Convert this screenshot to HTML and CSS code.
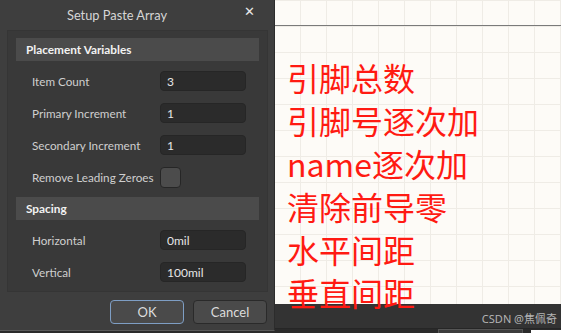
FILE: index.html
```html
<!DOCTYPE html>
<html>
<head>
    <title>Setup Paste Array</title>
    <link rel="stylesheet" href="styles.css">
</head>
<body>
    <div class="dialog">
        <div class="titlebar">
            <span class="title">Setup Paste Array</span>
            <span class="close">&#x2715;</span>
        </div>
        <div class="panel">
            <div class="section-head">Placement Variables</div>
            <div class="row">
                <span class="label">Item Count</span>
                <input class="field" type="text" value="3">
            </div>
            <div class="row">
                <span class="label">Primary Increment</span>
                <input class="field" type="text" value="1">
            </div>
            <div class="row">
                <span class="label">Secondary Increment</span>
                <input class="field" type="text" value="1">
            </div>
            <div class="row">
                <span class="label">Remove Leading Zeroes</span>
                <span class="check"></span>
            </div>
            <div class="section-head">Spacing</div>
            <div class="row">
                <span class="label">Horizontal</span>
                <input class="field" type="text" value="0mil">
            </div>
            <div class="row">
                <span class="label">Vertical</span>
                <input class="field" type="text" value="100mil">
            </div>
        </div>
        <div class="footer">
            <button class="btn btn-ok">OK</button>
            <button class="btn">Cancel</button>
        </div>
    </div>

    <div class="canvas">
        <div class="canvas-top"></div>
        <div class="notes">
            <div>引脚总数</div>
            <div>引脚号逐次加</div>
            <div>name逐次加</div>
            <div>清除前导零</div>
            <div>水平间距</div>
            <div>垂直间距</div>
        </div>
        <div class="statusbar">
            <span class="watermark">CSDN @焦佩奇</span>
        </div>
        <div class="bottom-strip">
            <span class="strip-box"></span>
            <span class="strip-white"></span>
        </div>
    </div>
</body>
</html>
```

FILE: styles.css
```css
body {
    margin: 0;
    width: 561px;
    height: 333px;
    display: flex;
    overflow: hidden;
    font-family: Lato, "Noto Sans", sans-serif;
    background: #2b2b2b;
}

/* dialog */
.dialog {
    width: 274px;
    height: 330px;
    background: #3e3e3e;
    border-right: 1px solid #2c2c2c;
    border-bottom: 1px solid #5a5a5a;
    display: flex;
    flex-direction: column;
    flex-shrink: 0;
}

.titlebar {
    height: 30px;
    display: flex;
    align-items: center;
    position: relative;
}

.title {
    width: 234px;
    text-align: center;
    color: #d6d6d6;
    font-size: 12.8px;
}

.close {
    position: absolute;
    left: 244px;
    top: 4px;
    color: #e8e8e8;
    font-size: 13px;
    font-family: "DejaVu Sans", sans-serif;
}

.panel {
    margin: 0 6px 0 7px;
    height: 246px;
    background: #393939;
    border: 1px solid #353535;
    padding: 7px 8px 7px 8px;
}

.section-head {
    height: 23px;
    background: #4b4b4b;
    color: #f2f2f2;
    font-weight: bold;
    font-size: 11.8px;
    display: flex;
    align-items: center;
    padding-left: 10px;
    margin-bottom: 4px;
}

.row {
    height: 32px;
    display: flex;
    align-items: center;
    padding-left: 16px;
}

.row:nth-child(5) {
    margin-bottom: 4px;
}

.label {
    width: 128px;
    color: #cfcfcf;
    font-size: 11.7px;
    white-space: nowrap;
}

.field {
    width: 86px;
    height: 20px;
    box-sizing: border-box;
    margin: 0;
    padding: 0 0 0 6px;
    background: #2b2b2b;
    border: 1px solid #262626;
    border-radius: 4px;
    color: #e6e6e6;
    font-family: Lato, sans-serif;
    font-size: 12px;
    outline: none;
}

.check {
    width: 21px;
    height: 21px;
    box-sizing: border-box;
    background: #4c4c4c;
    border: 1px solid #262626;
    border-radius: 4px;
}

.footer {
    display: flex;
    justify-content: flex-end;
    gap: 9px;
    padding: 8px 7px 0 0;
}

.btn {
    width: 74px;
    height: 24px;
    margin: 0;
    background: #4a4a4a;
    border: 1px solid #2a2a2a;
    border-radius: 4px;
    color: #dcdcdc;
    font-family: Lato, sans-serif;
    font-size: 13px;
}

.btn-ok {
    border-color: #7e9ec4;
}

/* schematic canvas */
.canvas {
    flex: 1;
    display: flex;
    flex-direction: column;
    background-color: #fdfbf7;
    background-image:
        linear-gradient(to right, #efece6 1px, transparent 1px),
        linear-gradient(to bottom, #efece6 1px, transparent 1px);
    background-size: 26px 26px;
    background-position: 25px 0;
}

.canvas-top {
    height: 25px;
    border-bottom: 1px solid #7a7a7a;
    flex-shrink: 0;
}

.notes {
    position: relative;
    z-index: 1;
    height: 278px;
    box-sizing: border-box;
    padding: 30px 0 0 12px;
    color: #ff1a12;
    font-family: "Noto Sans CJK SC", "Noto Sans", sans-serif;
    font-size: 32px;
    line-height: 43px;
    white-space: nowrap;
}

.statusbar {
    height: 24px;
    background: #333333;
    display: flex;
    justify-content: flex-end;
    align-items: center;
    padding-right: 4px;
    flex-shrink: 0;
}

.watermark {
    color: #b4b4b4;
    font-size: 11px;
    font-family: "Noto Sans", "Noto Sans CJK SC", sans-serif;
    padding-top: 4px;
}

.bottom-strip {
    flex: 1;
    background: #2a2a2a;
    border-top: 1px solid #262626;
    display: flex;
    align-items: flex-end;
    justify-content: flex-end;
    gap: 8px;
}

.strip-box {
    width: 83px;
    height: 4px;
    background: #3c3c3c;
    border: 1px solid #555;
    border-bottom: none;
}

.strip-white {
    width: 30px;
    height: 4px;
    background: #ffffff;
}
```
